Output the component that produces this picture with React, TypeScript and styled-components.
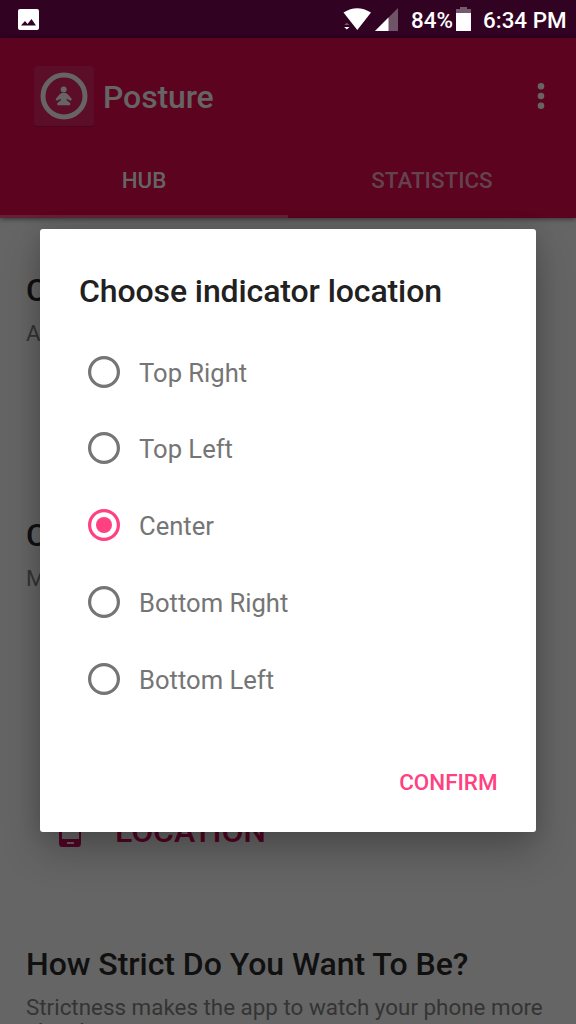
import React from 'react';
import styled, { createGlobalStyle } from 'styled-components';

const GlobalStyle = createGlobalStyle`
  * { box-sizing: border-box; }
  html, body { margin: 0; padding: 0; }
  body { font-family: Roboto, "Liberation Sans", sans-serif; background: #666; }
  h1, h2, p { margin: 0; }
`;

const Screen = styled.div`
  position: relative;
  display: flex;
  flex-direction: column;
  width: 576px;
  height: 1024px;
  overflow: hidden;
  background: #656565;
`;

const StatusBar = styled.header`
  display: flex;
  align-items: center;
  flex: none;
  height: 38px;
  padding: 0 10px 0 18px;
  background: #320223;
  color: #fff;
  font-size: 22.4px;
  line-height: 36px;
  font-weight: 500;
`;

const StatusIcons = styled.div`
  display: flex;
  align-items: center;
  margin-left: auto;
`;

const BatteryLevel = styled.span`
  width: 45px;
  padding-top: 1px;
  margin-left: 13px;
  white-space: nowrap;
`;

const Clock = styled.span`
  width: 83px;
  padding-top: 1px;
  margin-left: 12px;
  white-space: nowrap;
`;

const AppBar = styled.div`
  flex: none;
  height: 180px;
  background: #5c0320;
  box-shadow: 0 1px 5px rgba(0, 0, 0, 0.5);
`;

const Toolbar = styled.div`
  display: flex;
  align-items: center;
  height: 116px;
  padding: 0 31px 0 32px;
`;

const AppTitle = styled.h1`
  margin-left: 7px;
  padding-top: 1px;
  font-size: 32px;
  letter-spacing: -0.12px;
  font-weight: 500;
  color: #676466;
`;

const MenuButton = styled.button`
  display: flex;
  margin: 0 0 0 auto;
  padding: 0;
  border: 0;
  background: none;
`;

const Tabs = styled.nav`
  display: grid;
  grid-template-columns: 1fr 1fr;
  height: 64px;
`;

const Tab = styled.div<{ $active?: boolean }>`
  display: flex;
  justify-content: center;
  padding-top: 13px;
  font-size: 22.4px;
  line-height: 26px;
  font-weight: 500;
  color: ${(p) => (p.$active ? '#676466' : '#64424f')};
  border-bottom: 3px solid ${(p) => (p.$active ? '#652037' : '#5c0320')};
`;

const Content = styled.main`
  display: flex;
  flex-direction: column;
  padding: 53px 0 0 26px;
`;

const Section = styled.section<{ $height: number }>`
  height: ${(p) => p.$height}px;
`;

const SectionTitle = styled.h2`
  font-size: 32px;
  line-height: 38px;
  letter-spacing: -0.05px;
  font-weight: 500;
  color: #101010;
  white-space: nowrap;
`;

const SectionText = styled.p`
  margin-top: 12px;
  font-size: 22.4px;
  line-height: 24px;
  color: #343434;
`;

const LocationAction = styled.div`
  display: flex;
  align-items: center;
  height: 38px;
  margin-top: 219px;
  padding-left: 32px;
  color: #520524;
  font-size: 32px;
  font-weight: 500;
`;

const LocationLabel = styled.span`
  margin-left: 33px;
  padding-top: 5px;
  letter-spacing: -0.1px;
`;

const Dialog = styled.div`
  position: absolute;
  left: 40px;
  top: 229.4px;
  display: flex;
  flex-direction: column;
  width: 496px;
  height: 603px;
  padding: 43px 39px 36px;
  border-radius: 3px;
  background: #fff;
  box-shadow: 0 19px 38px rgba(0, 0, 0, 0.24), 0 0 20px rgba(0, 0, 0, 0.12);
`;

const DialogTitle = styled.h2`
  font-size: 32px;
  line-height: 38px;
  letter-spacing: -0.1px;
  font-weight: 500;
  color: #212121;
  white-space: nowrap;
`;

const Options = styled.div`
  display: flex;
  flex-direction: column;
  margin-top: 22.8px;
`;

const Option = styled.label`
  display: flex;
  align-items: center;
  height: 76.8px;
  padding-left: 9px;
  color: #757575;
  font-size: 25.6px;
`;

const OptionLabel = styled.span`
  margin-left: 19px;
  padding-top: 2px;
`;

const RadioMark = styled.svg<{ $checked: boolean }>`
  flex: none;
  width: 32px;
  height: 32px;
  color: ${(p) => (p.$checked ? '#ff4081' : '#757575')};
`;

const ConfirmButton = styled.button`
  align-self: flex-end;
  margin: auto -0.5px 0 0;
  padding: 0;
  border: 0;
  background: none;
  font: 500 22.4px/28px Roboto, "Liberation Sans", sans-serif;
  color: #ff4081;
`;

const PictureIcon = () => (
  <svg width="21" height="21" viewBox="0 0 21 21">
    <rect width="21" height="21" rx="2" fill="#fff" />
    <path d="M3 16.500L7 12l2.500 3L13.500 10l4.500 6.500z" fill="#320223" />
  </svg>
);

const WifiIcon = () => (
  <svg width="32" height="24" viewBox="0 0 32 24">
    <path d="M0.500 5.500Q14-3 28 5.500L14.300 23z" fill="#fff" />
    <path d="M1.200 18h5.200L3.800 15.800z" fill="#76596c" />
    <path d="M1.200 20h5.200L3.800 22.500z" fill="#fff" />
  </svg>
);

const SignalIcon = () => (
  <svg width="23" height="23" viewBox="0 0 23 23">
    <path d="M23 0v23H0z" fill="#6f5366" />
    <path d="M13.500 9.500V23H0z" fill="#fff" />
  </svg>
);

const BatteryIcon = () => (
  <svg width="15" height="24" viewBox="0 0 15 24">
    <path d="M0 6V2h4V0h7v2h4v4z" fill="#76596c" />
    <path d="M0 6h15v18H0z" fill="#fff" />
  </svg>
);

const PostureLogo = () => (
  <svg width="64" height="64" viewBox="0 0 64 64">
    <rect x="2" y="3" width="60" height="60" rx="4" fill="#4c041d" />
    <rect x="2" y="2" width="60" height="60" rx="4" fill="#5c0d27" />
    <circle cx="32" cy="32" r="21" fill="none" stroke="#676466" strokeWidth="5" />
    <g fill="#676466">
      <circle cx="31.700" cy="25.500" r="3" />
      <path d="M29.500 29h4.500l2.500 2 3.500 4.300-1.300 1.500-4-2v1.500l3.500 2.700v2.200H25.300v-2.200l3.500-2.700v-1.500l-4 2-1.300-1.500L27 31z" />
    </g>
  </svg>
);

const OverflowIcon = () => (
  <svg width="8" height="28" viewBox="0 0 8 28" fill="#676466">
    <circle cx="4" cy="4.300" r="3.300" />
    <circle cx="4" cy="14" r="3.300" />
    <circle cx="4" cy="23.700" r="3.300" />
  </svg>
);

const PhoneIcon = () => (
  <svg width="24" height="38" viewBox="0 0 24 38">
    <path
      fillRule="evenodd"
      fill="#520524"
      d="M4 0h16q3 0 3 3v31q0 4-3 4H4q-3 0-3-4V3q0-3 3-3zM4 5v25h17V5zM9 33v2h7v-2z"
    />
  </svg>
);

const Radio = ({ checked }: { checked: boolean }) => (
  <RadioMark $checked={checked} viewBox="0 0 32 32">
    <circle cx="16" cy="16" r="14.400" fill="none" stroke="currentColor" strokeWidth="3.200" />
    {checked && <circle cx="16" cy="16" r="8" fill="currentColor" />}
  </RadioMark>
);

const options = ['Top Right', 'Top Left', 'Center', 'Bottom Right', 'Bottom Left'];

export default function App() {
  return (
    <Screen>
      <GlobalStyle />
      <StatusBar>
        <PictureIcon />
        <StatusIcons>
          <WifiIcon />
          <SignalIcon />
          <BatteryLevel>84%</BatteryLevel>
          <BatteryIcon />
          <Clock>6:34 PM</Clock>
        </StatusIcons>
      </StatusBar>
      <AppBar>
        <Toolbar>
          <PostureLogo />
          <AppTitle>Posture</AppTitle>
          <MenuButton aria-label="More options">
            <OverflowIcon />
          </MenuButton>
        </Toolbar>
        <Tabs>
          <Tab $active>HUB</Tab>
          <Tab>STATISTICS</Tab>
        </Tabs>
      </AppBar>
      <Content>
        <Section $height={245}>
          <SectionTitle>C</SectionTitle>
          <SectionText>A</SectionText>
        </Section>
        <Section $height={429}>
          <SectionTitle>C</SectionTitle>
          <SectionText>M</SectionText>
          <LocationAction>
            <PhoneIcon />
            <LocationLabel>LOCATION</LocationLabel>
          </LocationAction>
        </Section>
        <Section $height={90}>
          <SectionTitle>How Strict Do You Want To Be?</SectionTitle>
          <SectionText>
            Strictness makes the app to watch your phone more
            <br />
            closely.
          </SectionText>
        </Section>
      </Content>
      <Dialog role="dialog">
        <DialogTitle>Choose indicator location</DialogTitle>
        <Options>
          {options.map((name) => (
            <Option key={name}>
              <Radio checked={name === 'Center'} />
              <OptionLabel>{name}</OptionLabel>
            </Option>
          ))}
        </Options>
        <ConfirmButton>CONFIRM</ConfirmButton>
      </Dialog>
    </Screen>
  );
}
